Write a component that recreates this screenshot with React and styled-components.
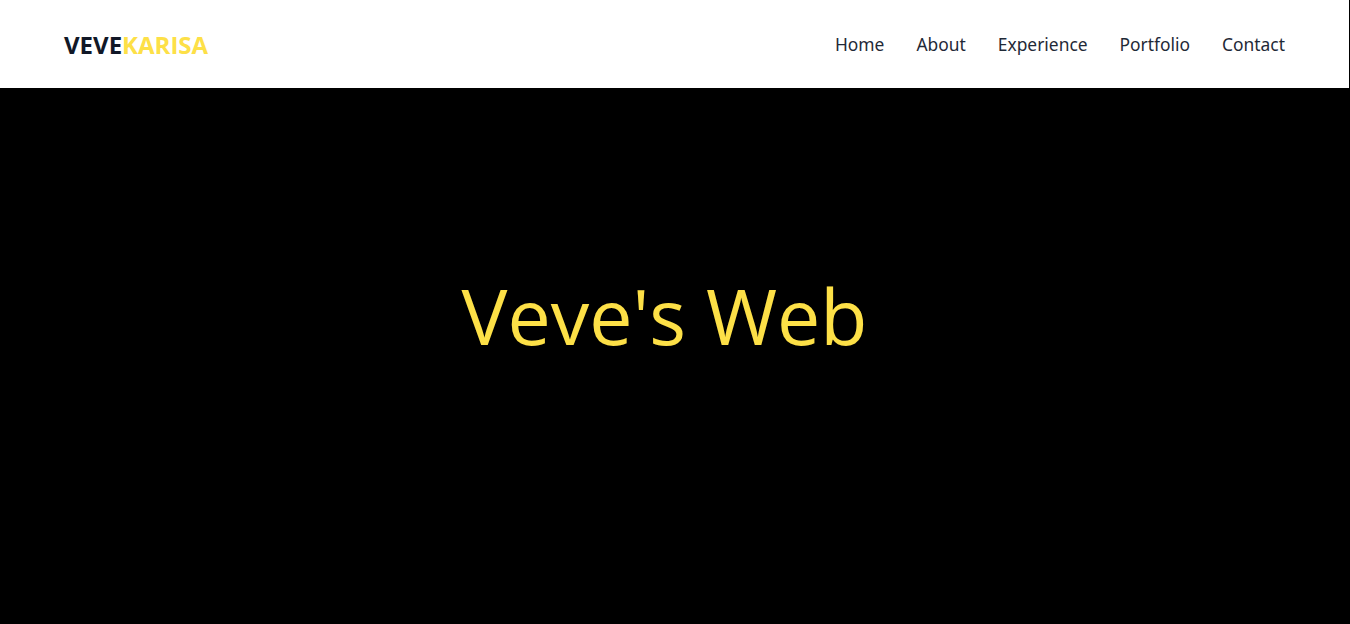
import React from "react";
import styled, { createGlobalStyle } from "styled-components";

const GlobalStyle = createGlobalStyle`
  html, body {
    margin: 0;
    padding: 0;
    background: #000;
  }
  body {
    font-family: "Open Sans", "Noto Sans", sans-serif;
  }
  * {
    box-sizing: border-box;
  }
`;

function App() {
  return (
    <>
      <GlobalStyle />
      <Page>
        <Navbar>
          <Logo>
            VEVE<Accent>KARISA</Accent>
          </Logo>
          <NavLinks>
            <NavLink href="#home">Home</NavLink>
            <NavLink href="#about">About</NavLink>
            <NavLink href="#experience">Experience</NavLink>
            <NavLink href="#portfolio">Portfolio</NavLink>
            <NavLink href="#contact">Contact</NavLink>
          </NavLinks>
        </Navbar>
        <Hero>
          <HeroTitle>Veve's Web</HeroTitle>
        </Hero>
      </Page>
    </>
  );
}

export default App;

const Page = styled.div`
  width: calc(100% - 1px);
  min-height: 100vh;
  display: flex;
  flex-direction: column;
`;

const Navbar = styled.nav`
  height: 88px;
  background-color: #fff;
  display: flex;
  align-items: center;
  justify-content: space-between;
  padding: 0 64px;
`;

const Logo = styled.div`
  font-size: 24px;
  font-weight: 700;
  color: #111827;
`;

const Accent = styled.span`
  color: #fde047;
`;

const NavLinks = styled.div`
  display: flex;
  gap: 32px;
`;

const NavLink = styled.a`
  font-family: "Noto Sans", "Open Sans", sans-serif;
  font-size: 17.4px;
  color: #1f2937;
  text-decoration: none;
`;

const Hero = styled.section`
  flex: 1;
  background-color: #000;
  display: flex;
  justify-content: center;
  padding: 189px 20px 0 0;
`;

const HeroTitle = styled.h1`
  margin: 0;
  font-size: 77px;
  font-weight: 400;
  line-height: 1;
  color: #fde047;
`;
